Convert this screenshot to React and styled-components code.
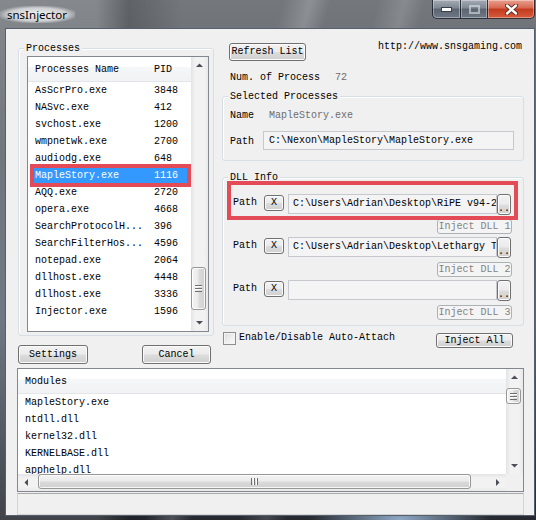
import React from 'react';
import styled, { createGlobalStyle, css } from 'styled-components';

const mono = `"Liberation Mono", "DejaVu Sans Mono", monospace`;

const GlobalStyle = createGlobalStyle`
  html, body { margin: 0; padding: 0; }
  body { width: 536px; height: 520px; overflow: hidden; background: #3a3f46; }
  *, *::before, *::after { box-sizing: border-box; }
`;

const Frame = styled.div`
  width: 536px;
  height: 520px;
  display: flex;
  flex-direction: column;
  overflow: hidden;
  background:
    linear-gradient(105deg, transparent 0 42%, rgba(255,255,255,.18) 46%, transparent 49%, transparent 56%, rgba(255,255,255,.14) 60%, transparent 63%),
    linear-gradient(90deg, rgba(255,255,255,.12) 0 18%, rgba(0,0,0,.18) 24%, transparent 34%),
    radial-gradient(ellipse 90px 40px at 400px 520px, rgba(170,200,235,.8), transparent),
    linear-gradient(180deg, #74787d 0%, #5d636a 30%, #5a6572 62%, #262a30 100%);
`;

const TitleBar = styled.div`
  height: 28px;
  flex: none;
  display: flex;
  justify-content: space-between;
  align-items: flex-start;
`;

const Title = styled.div`
  margin: 6px 0 0 0;
  padding: 0 8px 0 7px;
  height: 17px;
  font: 11.5px/17px "Noto Sans", "Liberation Sans", sans-serif;
  color: #000;
  background: radial-gradient(ellipse at center, rgba(255,255,255,.9) 0%, rgba(255,255,255,.6) 55%, rgba(255,255,255,0) 78%);
`;

const CaptionButtons = styled.div`
  display: flex;
  margin-right: 1px;
`;

const CapButton = styled.div`
  width: ${p => p.$w}px;
  height: 19px;
  margin-left: -1px;
  display: flex;
  align-items: center;
  justify-content: center;
  border: 1px solid rgba(25, 30, 40, .85);
  border-top: none;
  box-shadow: inset 0 0 0 1px rgba(255,255,255,.35);
  background: linear-gradient(180deg, #a4abb4 0%, #7e8792 45%, #5b6470 50%, #6f7985 100%);
  ${p => p.$first && css`border-bottom-left-radius: 5px;`}
  ${p => p.$close && css`
    border-bottom-right-radius: 5px;
    background: linear-gradient(180deg, #eaa08f 0%, #d5674f 45%, #c23a1e 50%, #d75b3c 100%);
  `}
`;

const Client = styled.div`
  flex: 1;
  margin: 0 1px 4px 5px;
  background: #f0f0f0;
  border: 1px solid #55606c;
  display: flex;
  flex-direction: column;
  padding: 0 10px 0 11px;
  font: 10px ${mono};
  color: #000;
`;

const TopGrid = styled.div`
  display: grid;
  grid-template-columns: 196px 302px;
  column-gap: 8px;
  margin-left: 1px;
  align-items: start;
`;

const Column = styled.div`
  display: flex;
  flex-direction: column;
`;

const GroupBox = styled.div`
  position: relative;
  display: flex;
  flex-direction: column;
  margin-top: ${p => p.$mt}px;
  padding: ${p => p.$pad};
  border: 1px solid #d5dfe5;
  border-radius: 3px;
  box-shadow: inset 1px 1px 0 #fff;
`;

const Caption = styled.span`
  align-self: flex-start;
  margin: -7px 0 0 ${p => p.$ml ?? 5}px;
  padding: 0 2px;
  background: #f0f0f0;
  line-height: 13px;
  white-space: nowrap;
`;

const ListFrame = styled.div`
  margin: ${p => p.$m};
  height: ${p => p.$h}px;
  border: 1px solid #828790;
  background: #fff;
  display: grid;
  grid-template-columns: minmax(0, 1fr) 17px;
  grid-template-rows: ${p => (p.$hscroll ? 'minmax(0, 1fr) 17px' : 'minmax(0, 1fr)')};
  overflow: hidden;
`;

const ListBody = styled.div`
  overflow: hidden;
  display: flex;
  flex-direction: column;
`;

const ListHeader = styled.div`
  flex: none;
  height: 25px;
  display: grid;
  grid-template-columns: ${p => p.$cols};
  align-items: center;
  padding-left: 7px;
  border-bottom: 1px solid #e3e5e8;
  background: linear-gradient(180deg, #ffffff 0%, #ffffff 40%, #f6f7f8 41%, #f1f2f4 100%);
  white-space: nowrap;
`;

const ProcRow = styled.div`
  flex: none;
  display: grid;
  grid-template-columns: 119px 1fr;
  width: 155px;
  height: 17px;
  line-height: 17px;
  margin-left: 5px;
  padding-left: 2px;
  white-space: nowrap;
  ${p => p.$selected && css`
    background: #3399ff;
    color: #fff;
    outline: 4px solid #e34c57;
    outline-offset: -1px;
  `}
`;

const ModuleRow = styled.div`
  flex: none;
  height: 17px;
  line-height: 17px;
  padding-left: 7px;
  white-space: nowrap;
`;

const ScrollBar = styled.div`
  display: flex;
  flex-direction: ${p => (p.$horizontal ? 'row' : 'column')};
  background: ${p => (p.$horizontal
    ? 'linear-gradient(180deg, #e4e4e4 0%, #f2f2f2 25%, #f2f2f2 75%, #e9e9e9 100%)'
    : 'linear-gradient(90deg, #e4e4e4 0%, #f2f2f2 25%, #f2f2f2 75%, #e9e9e9 100%)')};
`;

const ArrowBox = styled.div`
  flex: none;
  width: 17px;
  height: 17px;
  display: flex;
  align-items: center;
  justify-content: center;
`;

const Track = styled.div`
  flex: 1;
  display: flex;
  flex-direction: ${p => (p.$horizontal ? 'row' : 'column')};
  padding: ${p => (p.$horizontal ? `0 0 0 ${p.$offset}px` : `${p.$offset}px 0 0 0`)};
`;

const Thumb = styled.div`
  flex: none;
  ${p => (p.$horizontal
    ? css`width: ${p.$size}px; height: 15px;
          background: linear-gradient(180deg, #f3f3f3 0%, #ebebeb 45%, #dadada 55%, #d0d0d0 100%);`
    : css`height: ${p.$size}px; width: 15px;
          background: linear-gradient(90deg, #f3f3f3 0%, #ebebeb 45%, #dadada 55%, #d0d0d0 100%);`)}
  border: 1px solid #979797;
  border-radius: 3px;
  box-shadow: inset 0 0 0 1px rgba(255,255,255,.8);
  display: flex;
  align-items: center;
  justify-content: center;
`;

const Corner = styled.div`
  background: #f0f0f0;
`;

const ButtonRow = styled.div`
  display: flex;
  margin-top: 9px;
`;

const Button = styled.button`
  flex: none;
  width: ${p => p.$w}px;
  height: ${p => p.$h}px;
  margin: ${p => p.$m || '0'};
  padding: 0;
  font: 10px/1 ${mono};
  color: #000;
  border: 1px solid #707070;
  border-radius: 3px;
  background: linear-gradient(180deg, #f2f2f2 0%, #ebebeb 49%, #dddddd 51%, #cfcfcf 100%);
  box-shadow: inset 0 0 0 1px #fbfbfb;
  display: flex;
  align-items: ${p => (p.$bottom ? 'flex-end' : 'center')};
  justify-content: center;
  white-space: nowrap;
  overflow: hidden;
  &:disabled {
    border-color: #adb2b5;
    background: #f4f4f4;
    color: #838383;
    box-shadow: none;
  }
`;

const TopRow = styled.div`
  display: flex;
  justify-content: space-between;
  align-items: flex-start;
  padding: 12px 2px 0 7px;
  line-height: 12px;
`;

const InfoRow = styled.div`
  display: grid;
  grid-template-columns: ${p => p.$label}px 1fr;
  margin-top: ${p => p.$mt}px;
  padding-left: ${p => p.$pl}px;
  line-height: 12px;
`;

const Muted = styled.span`
  color: #6d6d6d;
`;

const PathRow = styled.div`
  display: flex;
  align-items: center;
  margin-top: 9px;
  padding-left: 7px;
`;

const Label = styled.span`
  flex: none;
  width: ${p => p.$w}px;
  line-height: 12px;
  margin-top: ${p => p.$mt || 0}px;
`;

const TextField = styled.div`
  flex: none;
  width: ${p => p.$w}px;
  height: ${p => p.$h}px;
  margin-left: ${p => p.$ml || 0}px;
  padding-left: ${p => p.$pl}px;
  border: 1px solid #c5c8cd;
  background: #f4f4f4;
  line-height: ${p => p.$h - 2}px;
  white-space: nowrap;
  overflow: hidden;
`;

const DllList = styled.div`
  display: flex;
  flex-direction: column;
  gap: 3px;
  margin-top: 10px;
`;

const DllBlock = styled.div`
  display: flex;
  flex-direction: column;
  gap: 4px;
`;

const DllRow = styled.div`
  display: flex;
  align-items: flex-start;
  height: 21px;
`;

const Annotation = styled.div`
  position: absolute;
  left: ${p => p.$x}px;
  top: ${p => p.$y}px;
  width: ${p => p.$w}px;
  height: ${p => p.$h}px;
  border: 4px solid #e34c57;
  pointer-events: none;
`;

const CheckRow = styled.div`
  display: flex;
  align-items: flex-start;
  margin-top: 6px;
`;

const CheckBox = styled.span`
  flex: none;
  width: 13px;
  height: 13px;
  margin-left: 1px;
  border: 1px solid #8e8f8f;
  background: linear-gradient(135deg, #dcdcdc 0%, #f0f0f0 60%, #fbfbfb 100%);
  box-shadow: inset 0 0 0 1px #f4f4f4;
`;

const CheckLabel = styled.span`
  margin-left: 3px;
  line-height: 11px;
`;

const StatusBar = styled.div`
  margin-top: 1px;
  height: 22px;
  border: 1px solid #d4d4d4;
  border-top-color: #a9a9a9;
  background: #f0f0f0;
`;

const Arrow = ({ dir }) => {
  const rot = { up: 0, right: 90, down: 180, left: 270 }[dir];
  return (
    <svg width="7" height="7" viewBox="0 0 7 7" style={{ transform: `rotate(${rot}deg)` }}>
      <polygon points="0,5 3.5,1.5 7,5" fill="#4a4f57" />
    </svg>
  );
};

const Grip = ({ horizontal }) => (
  <svg width="7" height="7" viewBox="0 0 7 7" style={{ transform: horizontal ? 'rotate(90deg)' : 'none' }}>
    <rect x="0" y="0" width="7" height="1" fill="#6e6e6e" />
    <rect x="0" y="1" width="7" height="1" fill="#fff" />
    <rect x="0" y="3" width="7" height="1" fill="#6e6e6e" />
    <rect x="0" y="4" width="7" height="1" fill="#fff" />
    <rect x="0" y="6" width="7" height="1" fill="#6e6e6e" />
  </svg>
);

const VScroll = ({ offset, size }) => (
  <ScrollBar>
    <ArrowBox><Arrow dir="up" /></ArrowBox>
    <Track $offset={offset}>
      <Thumb $size={size}><Grip /></Thumb>
    </Track>
    <ArrowBox><Arrow dir="down" /></ArrowBox>
  </ScrollBar>
);

const HScroll = ({ offset, size }) => (
  <ScrollBar $horizontal>
    <ArrowBox><Arrow dir="left" /></ArrowBox>
    <Track $horizontal $offset={offset}>
      <Thumb $horizontal $size={size}><Grip horizontal /></Thumb>
    </Track>
    <ArrowBox><Arrow dir="right" /></ArrowBox>
  </ScrollBar>
);

const processes = [
  ['AsScrPro.exe', '3848'],
  ['NASvc.exe', '412'],
  ['svchost.exe', '1200'],
  ['wmpnetwk.exe', '2700'],
  ['audiodg.exe', '648'],
  ['MapleStory.exe', '1116'],
  ['AQQ.exe', '2720'],
  ['opera.exe', '4668'],
  ['SearchProtocolH...', '396'],
  ['SearchFilterHos...', '4596'],
  ['notepad.exe', '2064'],
  ['dllhost.exe', '4448'],
  ['dllhost.exe', '3336'],
  ['Injector.exe', '1596'],
];

const modules = ['MapleStory.exe', 'ntdll.dll', 'kernel32.dll', 'KERNELBASE.dll', 'apphelp.dll'];

const dlls = [
  'C:\\Users\\Adrian\\Desktop\\RiPE v94-2.dll',
  'C:\\Users\\Adrian\\Desktop\\Lethargy Trainer.dll',
  '',
];

export default function App() {
  return (
    <>
      <GlobalStyle />
      <Frame>
        <TitleBar>
          <Title>snsInjector</Title>
          <CaptionButtons>
            <CapButton $w={29} $first>
              <svg width="11" height="5" viewBox="0 0 11 5">
                <rect x="0.5" y="0.5" width="10" height="4" fill="#fff" stroke="#3a3f48" />
              </svg>
            </CapButton>
            <CapButton $w={28}>
              <svg width="11" height="9" viewBox="0 0 11 9" opacity="0.55">
                <rect x="1" y="1" width="9" height="7" fill="none" stroke="#e8ecf0" strokeWidth="2" />
              </svg>
            </CapButton>
            <CapButton $w={48} $close>
              <svg width="13" height="11" viewBox="0 0 13 11">
                <path d="M2 1.5 L11 9.5 M11 1.5 L2 9.5" stroke="#5a2418" strokeWidth="4.2" strokeLinecap="round" />
                <path d="M2 1.5 L11 9.5 M11 1.5 L2 9.5" stroke="#fff" strokeWidth="2.4" strokeLinecap="round" />
              </svg>
            </CapButton>
          </CaptionButtons>
        </TitleBar>

        <Client>
          <TopGrid>
            <Column>
              <GroupBox $mt={19} $pad="0">
                <Caption>Processes</Caption>
                <ListFrame $m="1px 4px 3px 8px" $h={276}>
                  <ListBody>
                    <ListHeader $cols="119px 1fr">
                      <span>Processes Name</span>
                      <span>PID</span>
                    </ListHeader>
                    {processes.map(([name, pid], i) => (
                      <ProcRow key={i} $selected={name === 'MapleStory.exe'}>
                        <span>{name}</span>
                        <span>{pid}</span>
                      </ProcRow>
                    ))}
                  </ListBody>
                  <VScroll offset={193} size={43} />
                </ListFrame>
              </GroupBox>
              <ButtonRow>
                <Button $w={70} $h={19}>Settings</Button>
                <Button $w={69} $h={19} $m="0 3px 0 auto">Cancel</Button>
              </ButtonRow>
            </Column>

            <Column>
              <TopRow>
                <Button $w={77} $h={18} $m="2px 0 0 0">Refresh List</Button>
                <span>http://www.snsgaming.com</span>
              </TopRow>
              <InfoRow $label={105} $mt={11} $pl={8}>
                <span>Num. of Process</span>
                <Muted>72</Muted>
              </InfoRow>

              <GroupBox $mt={12} $pad="0 0 10px 0">
                <Caption>Selected Processes</Caption>
                <InfoRow $label={39} $mt={7} $pl={7}>
                  <span>Name</span>
                  <Muted>MapleStory.exe</Muted>
                </InfoRow>
                <PathRow>
                  <Label $w={33} $mt={2}>Path</Label>
                  <TextField $w={251} $h={19} $pl={5}>C:\Nexon\MapleStory\MapleStory.exe</TextField>
                </PathRow>
              </GroupBox>

              <GroupBox $mt={16} $pad="0 0 5px 10px">
                <Caption $ml={-5}>DLL Info</Caption>
                <DllList>
                  {dlls.map((path, i) => (
                    <DllBlock key={i}>
                      <DllRow>
                        <Label $w={31} $mt={3}>Path</Label>
                        <Button $w={20} $h={16} $m="1px 0 0 0">X</Button>
                        <TextField $w={209} $h={20} $ml={4} $pl={4}>{path}</TextField>
                        <Button $w={14} $h={21} $bottom>..</Button>
                      </DllRow>
                      <Button $w={75} $h={15} $m="0 11px 0 auto" disabled>Inject DLL {i + 1}</Button>
                    </DllBlock>
                  ))}
                </DllList>
                <Annotation $x={4} $y={3} $w={291} $h={39} />
              </GroupBox>

              <CheckRow>
                <CheckBox />
                <CheckLabel>Enable/Disable Auto-Attach</CheckLabel>
                <Button $w={77} $h={15} $m="1px 11px 0 auto">Inject All</Button>
              </CheckRow>
            </Column>
          </TopGrid>

          <ListFrame $m="4px 0 0 0" $h={124} $hscroll>
            <ListBody>
              <ListHeader $cols="1fr">
                <span>Modules</span>
              </ListHeader>
              {modules.map((m, i) => (
                <ModuleRow key={i}>{m}</ModuleRow>
              ))}
            </ListBody>
            <VScroll offset={2} size={16} />
            <HScroll offset={3} size={433} />
            <Corner />
          </ListFrame>
          <StatusBar />
        </Client>
      </Frame>
    </>
  );
}
